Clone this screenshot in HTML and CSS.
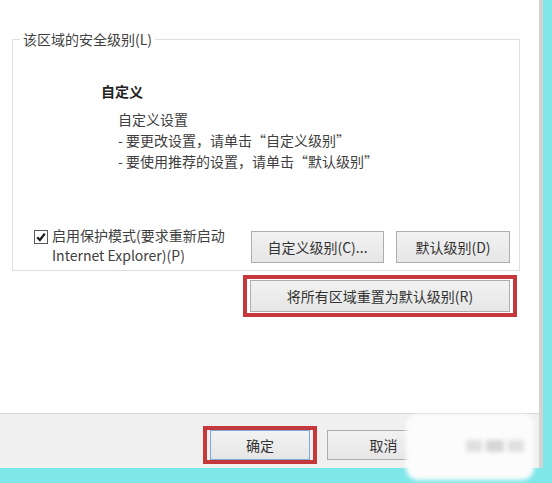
FILE: index.html
```html
<!DOCTYPE html>
<html lang="zh-CN">
<head>
<meta charset="utf-8">
<title>安全级别</title>
<link rel="stylesheet" href="styles.css">
</head>
<body>
<div class="screen">
  <div class="window">
    <div class="main">
      <fieldset class="group">
        <legend class="group-title">该区域的安全级别(L)</legend>
        <div class="level">自定义</div>
        <div class="desc">
          <div>自定义设置</div>
          <div>- 要更改设置，请单击“自定义级别”</div>
          <div>- 要使用推荐的设置，请单击“默认级别”</div>
        </div>
        <div class="options">
          <label class="protect">
            <span class="check"><svg width="10" height="10" viewBox="0 0 10 10"><path d="M1.2 5.2 L3.9 8 L8.8 1.6" fill="none" stroke="#1a1a1a" stroke-width="2.2"/></svg></span>
            <span class="protect-text">启用保护模式(要求重新启动<br>Internet Explorer)(P)</span>
          </label>
          <div class="level-buttons">
            <button class="btn btn-custom">自定义级别(C)...</button>
            <button class="btn btn-default">默认级别(D)</button>
          </div>
        </div>
      </fieldset>
      <div class="reset-row">
        <div class="mark mark-reset">
          <button class="btn btn-reset">将所有区域重置为默认级别(R)</button>
        </div>
      </div>
    </div>
    <div class="bar">
      <div class="mark mark-ok">
        <button class="btn btn-ok">确定</button>
      </div>
      <button class="btn btn-cancel">取消</button>
    </div>
  </div>
  <div class="watermark">
    <span class="wm-block wm-a"></span>
    <span class="wm-block wm-b"></span>
    <span class="wm-block wm-c"></span>
  </div>
</div>
</body>
</html>
```
FILE: styles.css
```css
* { box-sizing: border-box; }
html, body { margin: 0; padding: 0; }
body {
  font-family: "Noto Sans CJK SC", "Noto Sans", sans-serif;
  font-size: 14px;
  color: #404040;
  background: #7fe7e8;
}
.screen {
  position: relative;
  width: 552px;
  height: 483px;
  background: #7fe7e8;
  overflow: hidden;
}
.window {
  width: 543px;
  height: 468px;
  background: #fff;
  border-right: 4px solid #d2d2d2;
  display: flex;
  flex-direction: column;
}
.main {
  flex: 1;
  padding: 29px 0 0 12px;
}
.group {
  margin: 0;
  width: 508px;
  height: 242px;
  padding: 0 9px 0 0;
  border: 1px solid #dedede;
  display: block;
}
.group-title {
  margin-left: 7px;
  padding: 0 3px;
  line-height: 20px;
  font-size: 14px;
}
.level {
  margin: 32px 0 0 88px;
  font-weight: bold;
  line-height: 21px;
  color: #222;
}
.desc {
  margin: 7px 0 0 105px;
  line-height: 21px;
}
.options {
  margin-top: 53px;
  display: flex;
  align-items: flex-start;
}
.protect {
  display: flex;
  align-items: flex-start;
  margin-left: 21px;
  line-height: 20px;
}
.check {
  width: 14px;
  height: 14px;
  border: 1px solid #5a5a5a;
  background: #fff;
  margin-top: 5px;
  margin-right: 4px;
  display: flex;
  align-items: center;
  justify-content: center;
}
.level-buttons {
  margin-left: auto;
  margin-top: 6px;
  display: flex;
  gap: 12px;
}
.btn {
  font-family: inherit;
  font-size: 14px;
  color: #333;
  height: 32px;
  padding: 0;
  border: 1px solid #adadad;
  background: linear-gradient(#f2f2f2, #e6e6e6);
}
.btn-custom { width: 133px; }
.btn-default { width: 114px; }
.reset-row {
  display: flex;
  justify-content: flex-end;
  padding-right: 22px;
  margin-top: 4px;
}
.mark {
  border: 4px solid #c5383b;
}
.mark-reset {
  padding: 1px 3px;
}
.btn-reset { width: 260px; }
.bar {
  height: 55px;
  border-top: 1px solid #d6d6d6;
  background: #f0f0f0;
  display: flex;
  align-items: flex-start;
  padding: 12px 0 0 203px;
  gap: 10px;
}
.mark-ok {
  padding: 0 3px;
}
.btn-ok {
  width: 100px;
  height: 30px;
  border-color: #7ea9d6;
}
.btn-cancel {
  width: 113px;
  height: 30px;
  margin-top: 4px;
}
.watermark {
  position: absolute;
  left: 406px;
  top: 414px;
  width: 128px;
  height: 66px;
  background: #fcfcfc;
  border-radius: 12px;
  filter: blur(2px);
}
.wm-block {
  position: absolute;
  top: 26px;
  height: 12px;
  background: #e0e0e0;
}
.wm-a { left: 60px; width: 16px; }
.wm-b { left: 80px; width: 18px; background: #d6d6d6; }
.wm-c { left: 102px; width: 16px; }
```
